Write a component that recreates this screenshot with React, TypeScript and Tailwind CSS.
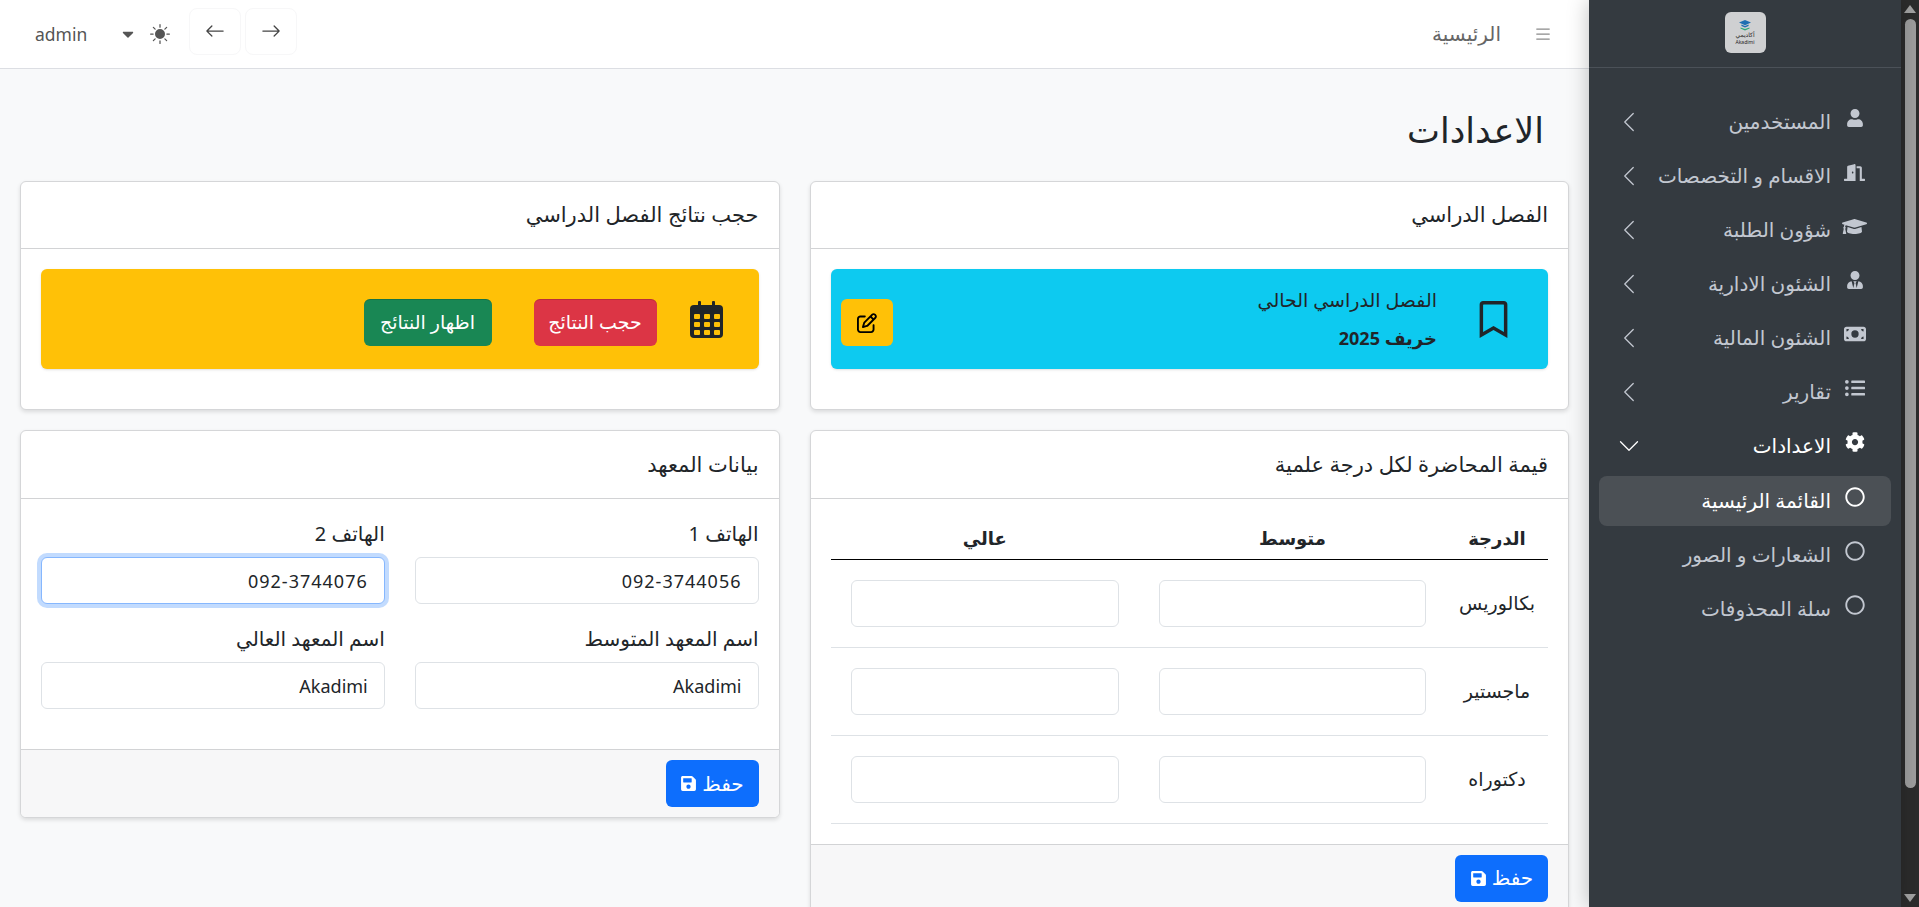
import { ChevronDown, ChevronLeft } from "lucide-react";
import {
  FaUser,
  FaUserTie,
  FaDoorOpen,
  FaGraduationCap,
  FaListUl,
  FaCog,
  FaRegCircle,
  FaRegBookmark,
  FaSave,
  FaCaretDown,
} from "react-icons/fa";
import { FaMoneyBill, FaRegPenToSquare } from "react-icons/fa6";
import { BsSunFill, BsArrowLeft, BsArrowRight, BsList } from "react-icons/bs";
import type { ReactNode } from "react";

const font = "font-['Noto_Sans','DejaVu_Sans',sans-serif]";

const navItems = [
  { label: "المستخدمين", icon: <FaUser size={18} /> },
  { label: "الاقسام و التخصصات", icon: <FaDoorOpen size={21} /> },
  { label: "شؤون الطلبة", icon: <FaGraduationCap size={25} /> },
  { label: "الشئون الادارية", icon: <FaUserTie size={18} /> },
  { label: "الشئون المالية", icon: <FaMoneyBill size={22} /> },
  { label: "تقارير", icon: <FaListUl size={20} /> },
];

const subItems = [
  { label: "القائمة الرئيسية", active: true },
  { label: "الشعارات و الصور", active: false },
  { label: "سلة المحذوفات", active: false },
];

const Card = ({
  title,
  children,
  footer,
  headerClass = "h-[67px]",
}: {
  title: string;
  children: ReactNode;
  footer?: ReactNode;
  headerClass?: string;
}) => (
  <div className="mb-5 overflow-hidden rounded-md border border-[#d5d6d8] bg-white shadow-[0_2px_4px_rgba(0,0,0,0.12)]">
    <div className={`flex items-center border-b border-[#d2d3d5] px-5 text-[21px] text-[#212529] ${headerClass}`}>{title}</div>
    <div className="p-5">{children}</div>
    {footer && (
      <div className="flex h-[68px] items-center justify-start border-t border-[#d2d3d5] bg-[#f7f7f8] px-5">{footer}</div>
    )}
  </div>
);

const SaveButton = () => (
  <button className="flex h-[47px] w-[93px] items-center justify-center gap-[5px] rounded-md bg-[#0d6efd] text-[20px] text-white">
    حفظ
    <FaSave size={17} />
  </button>
);

const Field = ({
  label,
  value,
  focused,
  phone,
}: {
  label: string;
  value: string;
  focused?: boolean;
  phone?: boolean;
}) => (
  <div>
    <label className="flex h-[38px] items-start text-[20px] leading-[30px] text-[#212529]">{label}</label>
    <input
      readOnly
      value={value}
      className={`h-[47px] w-full rounded-md border bg-white px-4 text-right text-[18px] text-[#212529] outline-none ${
        phone ? "tracking-[1px]" : ""
      } ${focused ? "border-[#86b7fe] shadow-[0_0_0_4px_rgba(13,110,253,0.25)]" : "border-[#dee2e6]"}`}
    />
  </div>
);

const Logo = () => (
  <div className="mb-[2px] flex h-[41px] w-[41px] flex-col items-center justify-center rounded-md bg-[#cfd0d2]">
    <svg width="12" height="11" viewBox="0 0 12 11">
      <path d="M6 0 12 2.6 6 5.2 0 2.6z" fill="#1f6fb2" />
      <path d="M2.4 4.4 6 6 9.6 4.4V6L6 7.4 2.4 6z" fill="#1f6fb2" />
      <path d="M1.5 7.4 6 9 10.5 7.4V8.6L6 10.6 1.5 8.6z" fill="#2aa876" />
    </svg>
    <span className="text-[6px] leading-[8px] text-[#222]">أكاديمي</span>
    <span className="text-[5px] leading-[6px] text-[#222]">Akadimi</span>
  </div>
);

const CalendarIcon = () => (
  <svg width="33" height="37" viewBox="0 0 33 37" className="shrink-0">
    <rect x="0" y="4" width="33" height="33" rx="4" fill="#212529" />
    <rect x="8" y="0" width="3" height="8" rx="1" fill="#212529" />
    <rect x="22" y="0" width="3" height="8" rx="1" fill="#212529" />
    {[13, 21, 29].map((y) =>
      [4, 14, 24].map((x) => <rect key={`${x}-${y}`} x={x} y={y} width="6" height="5" rx="1" fill="#ffc107" />)
    )}
  </svg>
);

const Sidebar = () => (
  <aside className="relative z-10 h-full w-[312px] shrink-0 bg-[#343a40] shadow-[0_0_20px_rgba(0,0,0,0.25)]" dir="rtl">
    <div className="flex h-[68px] items-center justify-center border-b border-[#4b5158]">
      <Logo />
    </div>
    <nav className="flex flex-col gap-1 px-[10px] pt-[29px] text-[20px] text-[#c2c7d0]">
      {navItems.map((item) => (
        <div key={item.label} className="flex h-[50px] items-center pr-[23px] pl-[13px]">
          <span className="relative -top-1 flex w-[27px] shrink-0 justify-center">{item.icon}</span>
          <span className="mr-[10px]">{item.label}</span>
          <ChevronLeft className="mr-auto" size={34} strokeWidth={0.9} />
        </div>
      ))}
      <div className="flex h-[50px] items-center pr-[23px] pl-[13px] text-white">
        <span className="relative -top-1 flex w-[27px] shrink-0 justify-center">
          <FaCog size={20} />
        </span>
        <span className="mr-[10px]">الاعدادات</span>
        <ChevronDown className="mr-auto" size={34} strokeWidth={0.9} />
      </div>
      {subItems.map((item) => (
        <div
          key={item.label}
          className={`flex h-[50px] items-center rounded-lg pr-[23px] ${item.active ? "mt-px bg-[#4b5055] text-white" : ""}`}
        >
          <span className="relative -top-1 flex w-[27px] shrink-0 justify-center">
            <FaRegCircle size={20} />
          </span>
          <span className="mr-[10px]">{item.label}</span>
        </div>
      ))}
    </nav>
  </aside>
);

const Scrollbar = () => (
  <div className="flex h-full w-[18px] shrink-0 flex-col items-center justify-between bg-[#2c2c2c] py-[5px]">
    <div className="h-0 w-0 border-x-[6px] border-b-[8px] border-x-transparent border-b-[#a3a3a3]" />
    <div className="mb-[100px] h-[769px] w-[11px] rounded-full bg-[#9f9f9f]" />
    <div className="h-0 w-0 border-x-[6px] border-t-[8px] border-x-transparent border-t-[#a3a3a3]" />
  </div>
);

const Header = () => (
  <header className="flex h-[69px] shrink-0 items-center border-b border-[#dcdee3] bg-white pr-[36px] pl-[35px]">
    <BsList size={20} className="text-[#8a8a8a]" />
    <span className="mr-[32px] text-[20px] text-[#666]">الرئيسية</span>
    <div className="mr-auto flex items-center gap-[4px]" dir="ltr">
      <span className="mr-[28px] text-[17.5px] text-[#555]">admin</span>
      <FaCaretDown size={18} className="mr-[9px] text-[#555]" />
      <BsSunFill size={20} className="mr-[15px] text-[#555]" />
      <button className="mb-[6px] flex h-[47px] w-[52px] items-center justify-center rounded-lg border border-[#f7f7f8] text-[#444]">
        <BsArrowLeft size={20} />
      </button>
      <button className="mb-[6px] flex h-[47px] w-[52px] items-center justify-center rounded-lg border border-[#f7f7f8] text-[#444]">
        <BsArrowRight size={20} />
      </button>
    </div>
  </header>
);

const GradesTable = () => (
  <table className="w-full table-fixed border-collapse text-[19px] text-[#212529]">
    <colgroup>
      <col className="w-[102px]" />
      <col className="w-[307px]" />
      <col />
    </colgroup>
    <thead>
      <tr className="h-[40px] border-b border-black text-center text-[18px] font-bold">
        <th>الدرجة</th>
        <th>متوسط</th>
        <th>عالي</th>
      </tr>
    </thead>
    <tbody>
      {["بكالوريس", "ماجستير", "دكتوراه"].map((name) => (
        <tr key={name} className="border-b border-[#dee2e6]">
          <td className="text-center">{name}</td>
          {[0, 1].map((i) => (
            <td key={i} className="p-5">
              <input readOnly className="block h-[47px] w-full rounded-md border border-[#dee2e6] bg-white outline-none" />
            </td>
          ))}
        </tr>
      ))}
    </tbody>
  </table>
);

export default function App() {
  return (
    <div className={`flex h-screen overflow-hidden bg-[#f8f9fa] ${font}`} dir="ltr">
      <main className="flex min-w-0 flex-1 flex-col" dir="rtl">
        <Header />
        <div className="px-5">
          <h1 className="flex h-[112px] items-center pr-[25px] pt-[10px] text-[35px] text-[#212529]">الاعدادات</h1>
          <div className="grid grid-cols-2 items-start gap-x-[30px]">
            <div>
              <Card title="الفصل الدراسي">
                <div className="mb-5 flex h-[100px] items-center rounded-md bg-[#0dcaf0] pr-[36px] pl-[10px] text-[#212529] shadow-sm">
                  <FaRegBookmark size={37} />
                  <div className="mr-[38px] flex flex-col gap-[10px]">
                    <span className="text-[19px]">الفصل الدراسي الحالي</span>
                    <span className="text-[18px] font-bold">خريف 2025</span>
                  </div>
                  <button className="mt-[7px] mr-auto flex h-[47px] w-[52px] items-center justify-center rounded-md bg-[#ffc107] text-black">
                    <FaRegPenToSquare size={20} />
                  </button>
                </div>
              </Card>
              <Card title="قيمة المحاضرة لكل درجة علمية" headerClass="h-[68px]" footer={<SaveButton />}>
                <GradesTable />
              </Card>
            </div>
            <div>
              <Card title="حجب نتائج الفصل الدراسي">
                <div className="mb-5 flex h-[100px] items-center rounded-md bg-[#ffc107] pr-[36px] shadow-sm">
                  <CalendarIcon />
                  <button className="mt-[7px] mr-[33px] h-[47px] w-[123px] rounded-md bg-[#dc3545] text-[19px] text-white shadow-[inset_0_1px_0_rgba(0,0,0,0.15)]">
                    حجب النتائج
                  </button>
                  <button className="mt-[7px] mr-[42px] h-[47px] w-[128px] rounded-md bg-[#198754] text-[19px] text-white shadow-[inset_0_1px_0_rgba(0,0,0,0.15)]">
                    اظهار النتائج
                  </button>
                </div>
              </Card>
              <Card title="بيانات المعهد" headerClass="h-[68px]" footer={<SaveButton />}>
                <div className="mb-5 grid grid-cols-2 gap-x-[30px] gap-y-[20px]">
                  <Field label="الهاتف 1" value="092-3744056" phone />
                  <Field label="الهاتف 2" value="092-3744076" phone focused />
                  <Field label="اسم المعهد المتوسط" value="Akadimi" />
                  <Field label="اسم المعهد العالي" value="Akadimi" />
                </div>
              </Card>
            </div>
          </div>
        </div>
      </main>
      <Sidebar />
      <Scrollbar />
    </div>
  );
}
